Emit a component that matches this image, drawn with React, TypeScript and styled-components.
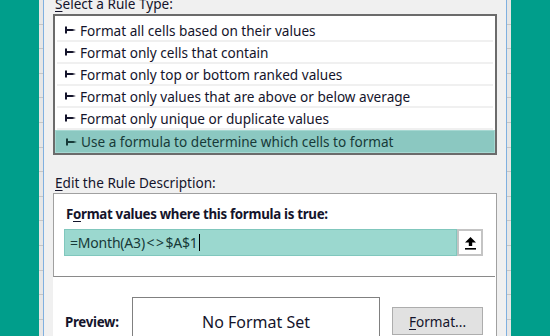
import styled, { createGlobalStyle } from 'styled-components'

const GlobalStyle = createGlobalStyle`
    html, body {
        margin: 0;
        padding: 0;
        width: 550px;
        height: 336px;
        overflow: hidden;
        background: #009e8b;
    }
`

const Page = styled.div`
    display: flex;
    width: 550px;
    height: 336px;
    overflow: hidden;
    font-family: 'Noto Sans', 'Open Sans', sans-serif;
    color: #14142b;
`
const Teal = styled.div<{ $w: number }>`
    width: ${(p) => p.$w}px;
    flex-shrink: 0;
    background: #009e8b;
`
const Strip = styled.div<{ $side: 'left' | 'right' }>`
    width: 5px;
    flex-shrink: 0;
    background: repeating-linear-gradient(
        to bottom,
        #e6e6e6 0px,
        #e6e6e6 23.6px,
        #c6c6c6 23.6px,
        #c6c6c6 24.6px
    );
    ${(p) =>
        p.$side === 'left'
            ? 'border-right: 1px solid #7fb0e0;'
            : 'border-left: 1px solid #7fb0e0;'}
    box-sizing: border-box;
`
const Dialog = styled.div`
    width: 462px;
    flex-shrink: 0;
    background: #f0f0f0;
    padding: 0 9px 0 9px;
    box-sizing: border-box;
    display: flex;
    flex-direction: column;
`
const GroupLabel = styled.div<{ $top: number }>`
    font-size: 13.6px;
    line-height: 20px;
    margin-top: ${(p) => p.$top}px;
    padding-left: 2px;
    height: 20px;
    u {
        text-decoration: underline;
        text-underline-offset: 2px;
    }
`
const RuleList = styled.div`
    border: 2px solid #6b6b6b;
    background: #fff;
    padding: 4px 2px 0 2px;
    display: flex;
    flex-direction: column;
`
const RuleRow = styled.div<{ $selected?: boolean }>`
    height: 22px;
    box-sizing: border-box;
    display: flex;
    align-items: center;
    gap: 4px;
    padding-left: 8px;
    font-size: 13.6px;
    border-bottom: 2px solid #f0f0f0;
    ${(p) =>
        p.$selected &&
        `
        margin: 0 -2px;
        padding-left: 10px;
        height: 23px;
        background: #8bc8c1;
        border: 1px solid #a6d8d2;
        color: #173a38;
    `}
`
const Bullet = () => (
    <svg width="11" height="8" viewBox="0 0 11 8">
        <path d="M0 0.5h2v2.4h5.4l3.6 1.1-3.6 1.1H2v2.4H0z" fill="currentColor" />
    </svg>
)
const DescBox = styled.div`
    border-top: 1px solid #a0a0a0;
    border-right: 1px solid #a0a0a0;
    background: #fff;
    flex: 1;
    display: flex;
    flex-direction: column;
`
const DescTop = styled.div`
    border-left: 1px solid #a0a0a0;
    border-bottom: 1px solid #8a8a8a;
    margin-right: 1px;
    padding: 10px 12px 20px 10px;
    display: flex;
    flex-direction: column;
`
const Prompt = styled.div`
    font-size: 13.3px;
    font-weight: 700;
    letter-spacing: -0.3px;
    line-height: 20px;
    margin-left: 2px;
    u {
        text-underline-offset: 2px;
    }
`
const FormulaRow = styled.div`
    display: flex;
    margin-top: 5px;
    height: 27px;
`
const FormulaInput = styled.div`
    flex: 1;
    background: #9bd8cf;
    border: 1px solid #80c7bd;
    display: flex;
    align-items: center;
    padding-left: 5px;
    font-size: 14px;
    color: #173a38;
    letter-spacing: -0.2px;
`
const Op = styled.span`
    letter-spacing: 1.5px;
    margin-left: 1.5px;
`
const Caret = styled.span`
    display: inline-block;
    width: 1px;
    height: 17px;
    background: #000;
    margin-left: 1px;
`
const RefButton = styled.div`
    width: 26px;
    box-sizing: border-box;
    border: 2px solid #c4c4c4;
    background: #fff;
    display: flex;
    align-items: center;
    justify-content: center;
`
const DescBottom = styled.div`
    display: flex;
    align-items: flex-start;
    padding: 20px 12px 0 12px;
`
const PreviewLabel = styled.div`
    font-size: 13.3px;
    font-weight: 700;
    letter-spacing: -0.3px;
    width: 67px;
    margin-top: 15px;
    line-height: 20px;
`
const PreviewBox = styled.div`
    width: 248px;
    height: 60px;
    box-sizing: border-box;
    border: 1px solid #808080;
    display: flex;
    justify-content: center;
    padding-top: 13px;
    font-size: 16px;
`
const FormatButton = styled.div`
    margin-left: 12px;
    margin-top: 10px;
    width: 91px;
    height: 28px;
    box-sizing: border-box;
    background: #e1e1e1;
    border: 1px solid #adadad;
    display: flex;
    align-items: center;
    justify-content: center;
    font-size: 13.6px;
    u {
        text-underline-offset: 2px;
    }
`

const rules = [
    'Format all cells based on their values',
    'Format only cells that contain',
    'Format only top or bottom ranked values',
    'Format only values that are above or below average',
    'Format only unique or duplicate values',
    'Use a formula to determine which cells to format',
]

export default function App() {
    return (
        <Page>
            <GlobalStyle />
            <Teal $w={39} />
            <Strip $side="left" />
            <Dialog>
                <GroupLabel $top={-6}>
                    <u>S</u>elect a Rule Type:
                </GroupLabel>
                <RuleList>
                    {rules.map((r, i) => (
                        <RuleRow key={r} $selected={i === rules.length - 1}>
                            <Bullet />
                            {r}
                        </RuleRow>
                    ))}
                </RuleList>
                <GroupLabel $top={18}>
                    <u>E</u>dit the Rule Description:
                </GroupLabel>
                <DescBox>
                    <DescTop>
                        <Prompt>
                            F<u>o</u>rmat values where this formula is true:
                        </Prompt>
                        <FormulaRow>
                            <FormulaInput>
                                =Month(A3)<Op>&lt;&gt;</Op>$A$1
                                <Caret />
                            </FormulaInput>
                            <RefButton>
                                <svg width="13" height="14" viewBox="0 0 13 14">
                                    <path d="M6.5 1L12 6.5H8.2V10H4.8V6.5H1z" fill="#000" />
                                    <rect x="1" y="12" width="11" height="1.6" fill="#000" />
                                </svg>
                            </RefButton>
                        </FormulaRow>
                    </DescTop>
                    <DescBottom>
                        <PreviewLabel>Preview:</PreviewLabel>
                        <PreviewBox>No Format Set</PreviewBox>
                        <FormatButton>
                            <u>F</u>ormat...
                        </FormatButton>
                    </DescBottom>
                </DescBox>
            </Dialog>
            <Strip $side="right" />
            <Teal $w={39} />
        </Page>
    )
}
